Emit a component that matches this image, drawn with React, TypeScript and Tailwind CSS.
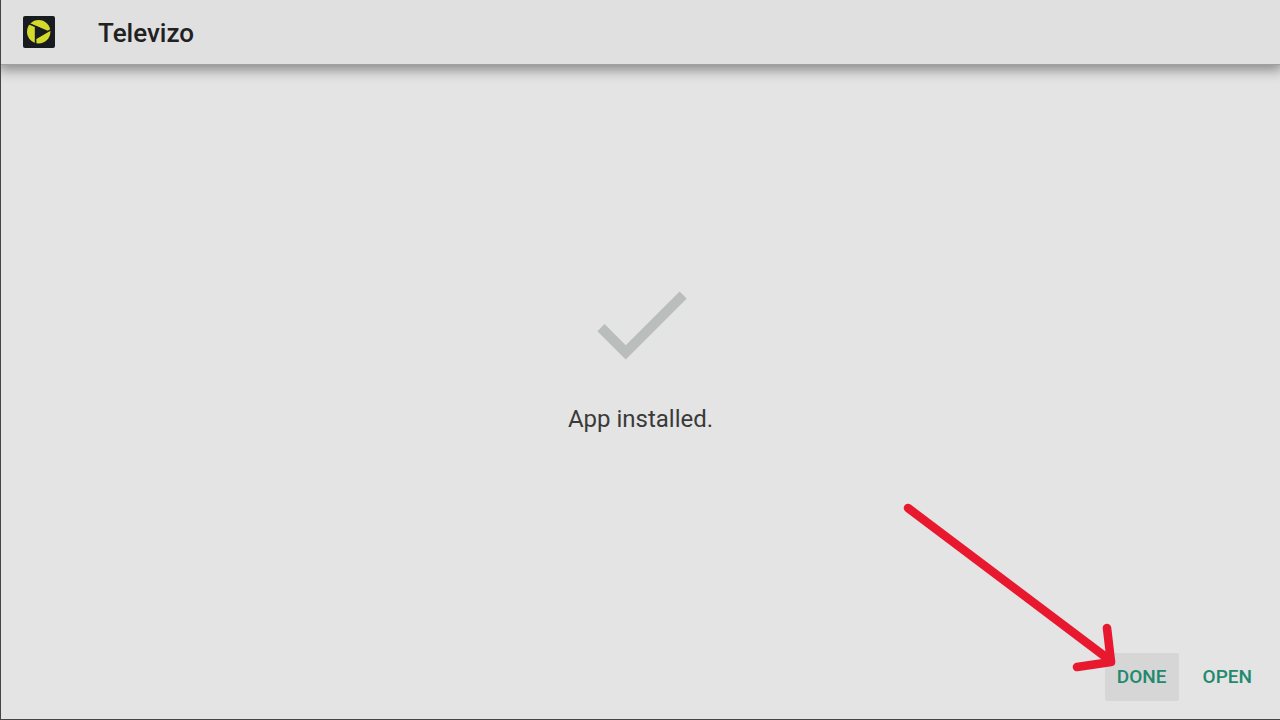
function AppLogo() {
  return (
    <svg viewBox="0 0 32 32" className="size-8 shrink-0" aria-hidden="true">
      <rect width="32" height="32" rx="2" fill="#181b20" />
      <circle cx="15.7" cy="15.8" r="11.7" fill="#d3da2c" />
      <path d="M12.6 9.8 L24.5 15.4 L12.6 22.6 Z" fill="#181b20" />
      <path d="M5 7.2 L24.5 15.4 M28 13.6 L12.6 22.6 M12.6 9.8 V28" stroke="#181b20" strokeWidth="1.6" fill="none" />
    </svg>
  );
}

function CheckMark() {
  return (
    <svg viewBox="0 0 24 24" className="size-[122px]" fill="#b9bebd" aria-hidden="true">
      <path d="M9 16.17L4.83 12l-1.42 1.41L9 19 21 7l-1.41-1.41z" />
    </svg>
  );
}

// red pointer that ends on the corner of the DONE button
function Arrow() {
  return (
    <svg
      viewBox="0 0 220 180"
      className="pointer-events-none absolute right-[160px] bottom-[39px] h-[180px] w-[220px]"
      fill="none"
      stroke="#e8192f"
      strokeWidth="8.6"
      strokeLinecap="round"
      strokeLinejoin="round"
      aria-hidden="true"
    >
      <path d="M8 8 L211 161 M207 128 L211 162 L177 167" />
    </svg>
  );
}

const buttonClass = "h-12 rounded-xs px-3 text-[19px] font-medium text-[#22896f]";

export default function App() {
  return (
    <div className="relative flex min-h-screen flex-col overflow-hidden border-b border-l border-[#454545] bg-[#e4e4e4] font-['Roboto',sans-serif]">
      <header className="flex h-[65px] items-center gap-[43px] border-b border-[#a0a0a0] bg-[#e0e0e0] px-[22px] shadow-[0_2px_12px_3px_rgba(0,0,0,0.4)]">
        <AppLogo />
        <h1 className="pt-0.5 text-[26px] font-medium text-[#212121]">Televizo</h1>
      </header>

      <main className="flex flex-1 flex-col items-center justify-center gap-[18px] pb-5">
        <CheckMark />
        <p className="text-2xl text-[#3a3a3a]">App installed.</p>
      </main>

      <footer className="flex justify-end gap-3 px-4 pb-[18px]">
        <button type="button" className={`${buttonClass} bg-[#d6d6d6]`}>
          DONE
        </button>
        <button type="button" className={buttonClass}>
          OPEN
        </button>
      </footer>

      <Arrow />
    </div>
  );
}
